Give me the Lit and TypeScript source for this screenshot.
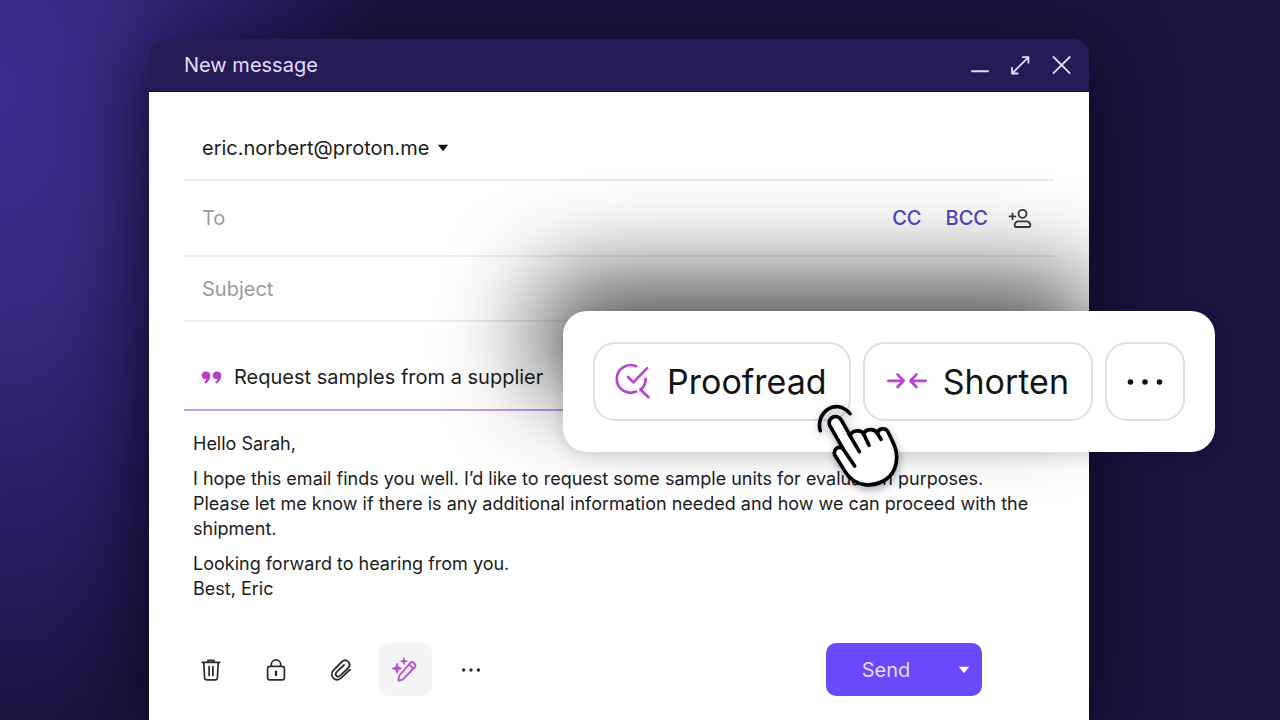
import { LitElement, html, css, svg } from "lit";
import { customElement } from "lit/decorators.js";

const caret = html`<svg class="caret" viewBox="0 0 12 8" aria-hidden="true">
  <path d="M0.8 0.8H11.2L6.6 6.6Q6 7.2 5.4 6.6Z" fill="currentColor" />
</svg>`;

const dots = (r: number, step: number) => svg`
  <circle cx=${20 - step} cy="20" r=${r} />
  <circle cx="20" cy="20" r=${r} />
  <circle cx=${20 + step} cy="20" r=${r} />`;

@customElement("app-root")
export class AppRoot extends LitElement {
  static styles = css`
    :host {
      display: block;
      box-sizing: border-box;
      height: 100vh;
      overflow: hidden;
      padding: 39px 191px 0 149px;
      font-family: Inter, "Liberation Sans", sans-serif;
      font-size: 20px;
      color: #1c1c1e;
      background: radial-gradient(ellipse 380px 640px at 0 90px, #3d2b8f 0%, #37287f 35%, #281c62 68%, #1b1340 100%);
    }
    button, input, select {
      font: inherit;
      color: inherit;
      border: 0;
      padding: 0;
      margin: 0;
      background: none;
    }
    svg { display: block; flex: none; overflow: visible; }
    .line {
      fill: none;
      stroke: currentColor;
      stroke-linecap: round;
      stroke-linejoin: round;
    }
    .window {
      position: relative;
      height: 100%;
      display: flex;
      flex-direction: column;
      border-radius: 16px 16px 0 0;
      box-shadow: 0 16px 76px 0 rgba(8, 5, 22, 0.9);
    }
    .titlebar {
      display: flex;
      align-items: center;
      height: 53px;
      flex: none;
      padding: 0 15px 0 35px;
      box-sizing: border-box;
      border-radius: 16px 16px 0 0;
      border-bottom: 1px solid #120c3c;
      background: #271b57;
      color: #e4dcfb;
    }
    .title {
      flex: 1;
      margin: 0;
      font-size: 20px;
      font-weight: 400;
    }
    .controls { display: flex; gap: 17px; }
    .controls svg { width: 24px; height: 24px; }
    .sheet {
      position: relative;
      overflow: hidden;
      flex: 1;
      padding: 24px 35px 0;
      background: #fff;
    }
    .row {
      display: flex;
      align-items: center;
      box-sizing: border-box;
      height: 65px;
      padding: 0 22px 0 18px;
      border-bottom: 2px solid #ececed;
    }
    .row input { flex: 1; min-width: 0; }
    .row input::placeholder { color: #9a9a9e; opacity: 1; }
    .from select { appearance: none; field-sizing: content; }
    .caret { width: 12px; height: 8px; }
    .from .caret { margin-left: 8px; color: #111; }
    .to { height: 76px; gap: 24px; }
    .copy { font-weight: 500; color: #5b45c4; }
    .contact { color: #3c3c3e; margin-left: -4px; }
    .contact svg { width: 24px; height: 24px; }
    .prompt {
      height: 66px;
      margin-top: 23px;
      gap: 12px;
      border-color: #c49ee2;
    }
    .quote { width: 20px; height: 16px; color: #b53fc5; }
    .message {
      padding: 20px 12px 0 9px;
      font-size: 18px;
      line-height: 25px;
      outline: none;
    }
    .message p { margin: 0 0 10px; }
    .actions {
      display: flex;
      align-items: center;
      gap: 12px;
      margin-top: 42px;
      padding-right: 72px;
      color: #2b2b2d;
    }
    .tool {
      display: grid;
      place-items: center;
      width: 53px;
      height: 53px;
      border-radius: 11px;
    }
    .tool svg { width: 28px; height: 28px; }
    .tool.active { background: #f4f3f5; color: #b950d0; }
    .tool .more { width: 40px; height: 40px; }
    .send {
      display: flex;
      margin-left: auto;
      height: 53px;
      border-radius: 10px;
      background: #6a49fb;
      color: #e3dcff;
    }
    .send .label { width: 120px; }
    .send .menu { display: grid; place-items: center; width: 36px; color: #fff; }
    .shade {
      position: absolute;
      top: 190px;
      left: 390px;
      right: -5px;
      height: 110px;
      border-radius: 30px;
      background: rgba(0, 0, 0, 0.76);
      filter: blur(49px);
    }
    .popover {
      position: absolute;
      top: 272px;
      right: -126px;
      display: flex;
      align-items: center;
      gap: 12px;
      box-sizing: border-box;
      height: 141px;
      padding: 0 30px;
      border-radius: 24px;
      background: #fff;
      color: #141416;
      font-size: 34px;
      box-shadow: 0 4px 16px rgba(0, 0, 0, 0.12);
    }
    .choice {
      display: flex;
      align-items: center;
      gap: 16px;
      height: 79px;
      box-sizing: border-box;
      padding: 0 22px;
      border: 2px solid #e0dfe0;
      border-radius: 22px;
    }
    .choice svg { width: 40px; height: 40px; color: #b943cf; }
    .choice .check { width: 34px; height: 34px; }
    .choice.rest { padding: 0 18px; }
    .choice.rest svg { color: #141416; }
    .pointer {
      position: absolute;
      left: 250px;
      top: 89px;
      width: 90px;
      height: 90px;
      filter: drop-shadow(1px 3px 4px rgba(20, 10, 60, 0.35));
    }
  `;

  render() {
    return html`
      <main class="window">
        <header class="titlebar">
          <h1 class="title">New message</h1>
          <div class="controls">
            <button aria-label="Minimize">
              <svg class="line" viewBox="0 0 24 24" stroke-width="2"><path d="M4 18.3H20" /></svg>
            </button>
            <button aria-label="Expand">
              <svg class="line" viewBox="0 0 24 24" stroke-width="1.8">
                <path d="M3.2 20.3 19.2 4.3M13.7 4.1H19.4V9.8M3 14.8V20.5H8.7" />
              </svg>
            </button>
            <button aria-label="Close">
              <svg class="line" viewBox="0 0 24 24" stroke-width="1.8"><path d="M3.5 4 19.7 20.2M19.7 4 3.5 20.2" /></svg>
            </button>
          </div>
        </header>
        <section class="sheet">
          <div class="row from">
            <select aria-label="From"><option>eric.norbert@proton.me</option></select>
            ${caret}
          </div>
          <div class="row to">
            <input type="text" aria-label="To" placeholder="To" />
            <button class="copy">CC</button>
            <button class="copy">BCC</button>
            <button class="contact" aria-label="Add contact">
              <svg class="line" viewBox="0 0 24 24" stroke-width="1.8">
                <circle cx="14.5" cy="7.8" r="4" />
                <path d="M9.8 15.4H19.2Q22.4 16.3 22.4 19.6Q22.4 21 21 21H8Q6.6 21 6.6 19.6Q6.6 16.3 9.8 15.4Z" />
                <path d="M1.6 10.4H7.4M4.5 7.5V13.3" />
              </svg>
            </button>
          </div>
          <div class="row">
            <input type="text" aria-label="Subject" placeholder="Subject" />
          </div>
          <div class="row prompt">
            <svg class="quote" viewBox="0 0 20 16" fill="currentColor" aria-hidden="true">
              <path d="M4 2.6A3.7 3.7 0 0 1 8.3 6.4C8.3 9.8 6.6 12.6 3.6 14.4L2 13.4C3.6 12.2 4.2 11.2 4.5 10A3.8 3.8 0 1 1 4 2.6Z" />
              <path d="M15 2.6A3.7 3.7 0 0 1 19.3 6.4C19.3 9.8 17.6 12.6 14.6 14.4L13 13.4C14.6 12.2 15.2 11.2 15.5 10A3.8 3.8 0 1 1 15 2.6Z" />
            </svg>
            <input type="text" aria-label="Prompt" .value=${"Request samples from a supplier"} />
          </div>
          <div class="message" role="textbox" aria-label="Message" aria-multiline="true" contenteditable="true" spellcheck="false">
            <p>Hello Sarah,</p>
            <p>I hope this email finds you well. I’d like to request some sample units for evaluation purposes. Please let me know if there is any additional information needed and how we can proceed with the shipment.</p>
            <p>Looking forward to hearing from you.<br />Best, Eric</p>
          </div>
          <div class="actions">
            <button class="tool" aria-label="Delete">
              <svg class="line" viewBox="0 0 28 28" stroke-width="1.7">
                <path d="M5.2 6.4H22.8M11 6V4.4H17V6M6.8 6.8 7.6 21.8Q7.8 23.8 9.8 23.8H18.2Q20.2 23.8 20.4 21.8L21.2 6.8M12.1 10.5V19.5M15.9 10.5V19.5" />
              </svg>
            </button>
            <button class="tool" aria-label="Encrypt">
              <svg class="line" viewBox="0 0 28 28" stroke-width="1.7">
                <rect x="5.6" y="10.4" width="16.8" height="13.4" rx="2.4" />
                <path d="M9.3 10.2V8.6A4.7 4.7 0 0 1 18.7 8.6V10.2" />
                <path d="M14 15.6V18.8" stroke-width="2.4" />
              </svg>
            </button>
            <button class="tool" aria-label="Attach file">
              <svg class="line" viewBox="0 0 28 28" stroke-width="1.8">
                <path d="M23 13.6 14.6 21.6C8.6 27 1.6 20.2 6.4 14.4L14.6 6C19.2 1.6 25.2 7.4 21.2 12L13.2 19.6C10.2 22.2 7.2 18.8 9.6 16.2L17 9" />
              </svg>
            </button>
            <button class="tool active" aria-label="Writing assistant">
              <svg class="line" viewBox="0 0 28 28" stroke-width="1.8">
                <path d="M18.6 6.6Q20 5.4 21.4 6.6L23 8.2Q24.2 9.6 23 11L11 23.4 7.2 24.6Q6 24.8 6.4 23.6L7.4 19.4ZM17 8.4 21.2 12.6" />
                <path d="M11.9 1.8 12.7 4.4 15.3 5.2 12.7 6 11.9 8.6 11.1 6 8.5 5.2 11.1 4.4Z" fill="currentColor" stroke-width="0.8" />
                <path d="M5 7.6 6.3 11.1 9.8 12.4 6.3 13.7 5 17.2 3.7 13.7 0.2 12.4 3.7 11.1Z" fill="currentColor" stroke-width="1" />
              </svg>
            </button>
            <button class="tool" aria-label="More options">
              <svg class="more" viewBox="0 0 40 40" fill="currentColor">${dots(1.7, 7.4)}</svg>
            </button>
            <div class="send">
              <button class="label">Send</button>
              <button class="menu" aria-label="Send options">${caret}</button>
            </div>
          </div>
          <div class="shade"></div>
        </section>
        <div class="popover" role="toolbar" aria-label="Writing assistant">
          <button class="choice">
            <svg class="line check" viewBox="6 6 32 32" stroke-width="2.5">
              <path d="M24 7.2A13 13 0 1 0 24 31M33 19V20A13 13 0 0 1 28 29.4M28 29 35.6 36.4" />
              <path d="M16.4 17.2 21.4 22.4 34.4 9" />
            </svg>
            Proofread
          </button>
          <button class="choice">
            <svg class="line" viewBox="0 0 40 40" stroke-width="2.8">
              <path d="M1.4 18.8H16M10.6 12.6 16.6 18.8 10.6 25M38.6 18.8H24.4M29.4 12.6 23.4 18.8 29.4 25" />
            </svg>
            Shorten
          </button>
          <button class="choice rest" aria-label="More suggestions">
            <svg viewBox="0 0 40 40" fill="currentColor">${dots(2.8, 14.5)}</svg>
          </button>
          <svg class="pointer" viewBox="700 210 270 270" aria-hidden="true">
            <g stroke="#000" stroke-width="11" stroke-linecap="round" stroke-linejoin="round">
              <path fill="#fff" d="M750 286C742 262 774 248 786 272L812 318C814 302 842 296 852 312C858 296 884 294 893 310C896 294 916 292 924 304L944 346C952 366 954 392 944 418C930 450 892 468 856 464C826 460 808 444 796 424L765 374C760 358 776 346 790 356Z" />
              <path fill="none" d="M790 356 825 408M808 312 839 365M852 312 868 346M893 310 904 328" />
              <path fill="none" d="M722 302C706 250 768 200 811 251" />
            </g>
          </svg>
        </div>
      </main>
    `;
  }
}
